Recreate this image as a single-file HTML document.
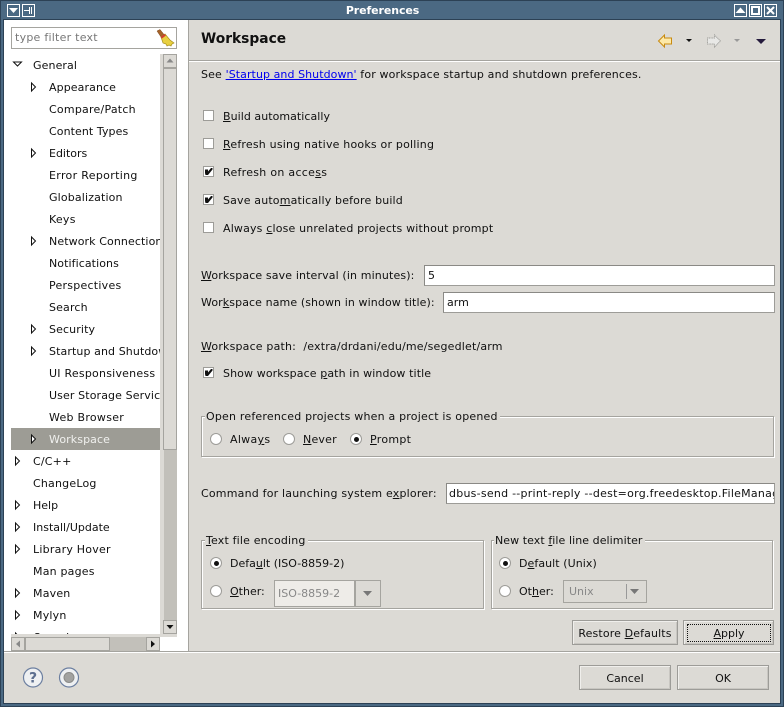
<!DOCTYPE html>
<html><head><meta charset="utf-8">
<style>
html,body{margin:0;padding:0;width:784px;height:707px;overflow:hidden;background:#dcdad5}
*{box-sizing:border-box}
body{font-family:"DejaVu Sans",sans-serif;font-size:11px;color:#101010;position:relative}
.a,.t{position:absolute}
.t{white-space:nowrap;line-height:16px;height:16px;margin-top:1px}
u{text-decoration:underline;text-underline-offset:1px}
.cb{position:absolute;width:11px;height:11px;background:#fff;border:1px solid #9d9c98}
.cb svg{position:absolute;left:0;top:0}
.r{position:absolute;width:12px;height:12px;border-radius:50%;background:#fff;border:1px solid #9d9c98}
.r.on:after{content:"";position:absolute;left:2.5px;top:2.5px;width:5px;height:5px;border-radius:50%;background:#111}
.inp{position:absolute;background:#fff;border:1px solid #9d9c98;border-top-color:#8a8985;border-left-color:#8a8985;height:21px;line-height:19px;padding-left:3px;white-space:nowrap;overflow:hidden}
.btn{position:absolute;background:#dcdad5;border:1px solid #9d9c98;box-shadow:inset 1px 1px 0 #f0efec,inset -1px -1px 0 #c8c6c1;text-align:center;line-height:25px;height:25px}
.grp{position:absolute;border:1px solid #a5a49f;box-shadow:1px 1px 0 #fff,inset 1px 1px 0 #fff}
.grp span{position:absolute;left:3px;top:-8px;background:#dcdad5;padding:0 2px 0 1px;line-height:16px;white-space:nowrap}
.tw{position:absolute;left:0;top:0}
</style></head>
<body>
<!-- window frame -->
<div class="a" style="left:0;top:0;width:784px;height:707px;background:#4b6983"></div>
<div class="a" style="left:0;top:0;width:784px;height:1px;background:#2c4155"></div>
<div class="a" style="left:0;top:0;width:1px;height:707px;background:#2c4155"></div>
<div class="a" style="left:783px;top:0;width:1px;height:707px;background:#2c4155"></div>
<div class="a" style="left:0;top:706px;width:784px;height:1px;background:#2c4155"></div>
<div class="a" style="left:3px;top:19px;width:778px;height:685px;background:#2c4155"></div>
<div class="a" style="left:4px;top:20px;width:776px;height:683px;background:#dcdad5"></div>
<div class="t" style="left:0;top:2px;width:765px;text-align:center;color:#fff;font-weight:bold;font-size:11px;letter-spacing:-.1px">Preferences</div>

<!-- title buttons left -->
<svg class="a" style="left:6px;top:3px" width="30" height="14">
<rect x="1.5" y="1.5" width="12" height="12" fill="#4b6983" stroke="#fff"/><path d="M3 5h9l-4.5 5z" fill="#fff"/>
<rect x="16.5" y="1.5" width="12" height="12" fill="#4b6983" stroke="#fff"/><path d="M18 7.500h5M23.500 4v7M25.500 4v7" stroke="#fff" stroke-width="1" fill="none"/>
</svg>
<!-- title buttons right -->
<svg class="a" style="left:733px;top:3px" width="46" height="14">
<rect x="1.5" y="1.5" width="12" height="12" fill="#4b6983" stroke="#fff"/><path d="M2.5 10h10l-5-5.500z" fill="#fff"/>
<rect x="16.5" y="1.5" width="12" height="12" fill="#4b6983" stroke="#fff"/><rect x="19" y="4" width="7" height="7" fill="none" stroke="#fff" stroke-width="2"/>
<rect x="31.5" y="1.5" width="12" height="12" fill="#4b6983" stroke="#fff"/><path d="M34 4l7 7M41 4l-7 7" stroke="#fff" stroke-width="2"/>
</svg>

<!-- left pane -->
<div class="a" style="left:4px;top:20px;width:184px;height:631px;background:#fff"></div>
<div class="a" style="left:188px;top:20px;width:1px;height:631px;background:#a5a49f"></div>
<div class="a" style="left:11px;top:27px;width:166px;height:22px;background:#fff;border:1px solid #a5a49f"></div>
<div class="t" style="left:15px;top:29px;color:#777;letter-spacing:.25px">type filter text</div>
<svg class="a" style="left:155px;top:28px" width="20" height="20">
<path d="M2 3l3-1.500 4 5-3 2.500z" fill="#a5622a" stroke="#7a4518" stroke-width=".5"/>
<path d="M6 9l4-3 5 6 4 3-2 1-1 2-2-1-2 1-1-2-3-1z" fill="#e8d040" stroke="#a89020" stroke-width=".7"/>
<path d="M5.500 9l4-3 1.500 1.500-4 3z" fill="#d04030"/>
</svg>

<!-- tree -->
<div class="a" style="left:11px;top:428px;width:149px;height:22px;background:#9d9c95"></div>
<div class="a" id="tree" style="left:0;top:0;width:160px;height:636px;overflow:hidden">
<div class="t" style="left:33px;top:57px;letter-spacing:.1px">General</div>
<div class="t" style="left:49px;top:79px;letter-spacing:.1px">Appearance</div>
<div class="t" style="left:49px;top:101px;letter-spacing:.23px">Compare/Patch</div>
<div class="t" style="left:49px;top:123px;letter-spacing:.08px">Content Types</div>
<div class="t" style="left:49px;top:145px">Editors</div>
<div class="t" style="left:49px;top:167px;letter-spacing:.33px">Error Reporting</div>
<div class="t" style="left:49px;top:189px;letter-spacing:.15px">Globalization</div>
<div class="t" style="left:49px;top:211px;letter-spacing:.25px">Keys</div>
<div class="t" style="left:49px;top:233px;letter-spacing:.1px">Network Connections</div>
<div class="t" style="left:49px;top:255px;letter-spacing:.08px">Notifications</div>
<div class="t" style="left:49px;top:277px;letter-spacing:.25px">Perspectives</div>
<div class="t" style="left:49px;top:299px;letter-spacing:.15px">Search</div>
<div class="t" style="left:49px;top:321px;letter-spacing:.12px">Security</div>
<div class="t" style="left:49px;top:343px;letter-spacing:.1px">Startup and Shutdown</div>
<div class="t" style="left:49px;top:365px;letter-spacing:.23px">UI Responsiveness</div>
<div class="t" style="left:49px;top:387px;letter-spacing:.12px">User Storage Service</div>
<div class="t" style="left:49px;top:409px;letter-spacing:.27px">Web Browser</div>
<div class="t" style="left:49px;top:431px;color:#f0f0ee;letter-spacing:.1px">Workspace</div>
<div class="t" style="left:33px;top:453px;letter-spacing:.2px">C/C++</div>
<div class="t" style="left:33px;top:475px;letter-spacing:.2px">ChangeLog</div>
<div class="t" style="left:33px;top:497px">Help</div>
<div class="t" style="left:33px;top:519px">Install/Update</div>
<div class="t" style="left:33px;top:541px;letter-spacing:.23px">Library Hover</div>
<div class="t" style="left:33px;top:563px;letter-spacing:.2px">Man pages</div>
<div class="t" style="left:33px;top:585px;letter-spacing:.2px">Maven</div>
<div class="t" style="left:33px;top:607px;letter-spacing:.2px">Mylyn</div>
<div class="t" style="left:33px;top:629px">Oomph</div>
<svg class="tw" width="60" height="640" fill="#fff" stroke="#111" stroke-width="1">
<path d="M13.500 62h8l-4 4z"/>
<path id="ar" d="M31.500 83v8l4-4z"/>
<path d="M31.500 149v8l4-4z"/>
<path d="M31.500 237v8l4-4z"/>
<path d="M31.500 325v8l4-4z"/>
<path d="M31.500 347v8l4-4z"/>
<path d="M31.500 435v8l4-4z" fill="#fff"/>
<path d="M15.500 457v8l4-4z"/>
<path d="M15.500 501v8l4-4z"/>
<path d="M15.500 523v8l4-4z"/>
<path d="M15.500 545v8l4-4z"/>
<path d="M15.500 589v8l4-4z"/>
<path d="M15.500 611v8l4-4z"/>
<path d="M15.500 633v8l4-4z"/>
</svg>
</div>

<!-- vertical scrollbar -->
<div class="a" style="left:160px;top:54px;width:17px;height:583px;background:#dcdad5"></div>
<div class="a" style="left:164px;top:54px;width:13px;height:580px;background:#c2c0ba"></div>
<div class="a" style="left:163px;top:54px;width:14px;height:14px;background:#dcdad5;border:1px solid #a5a49f"></div>
<svg class="a" style="left:163px;top:54px" width="14" height="14"><path d="M3.500 8.500h7l-3.500-4z" fill="#888"/></svg>
<div class="a" style="left:163px;top:68px;width:14px;height:382px;background:#dcdad5;border:1px solid #a5a49f"></div>
<div class="a" style="left:163px;top:620px;width:14px;height:14px;background:#dcdad5;border:1px solid #a5a49f"></div>
<svg class="a" style="left:163px;top:620px" width="14" height="14"><path d="M3.500 5h7l-3.500 4z" fill="#111"/></svg>
<!-- horizontal scrollbar -->
<div class="a" style="left:11px;top:634px;width:149px;height:3px;background:#dcdad5"></div>
<div class="a" style="left:11px;top:637px;width:149px;height:14px;background:#c2c0ba"></div>
<div class="a" style="left:11px;top:637px;width:14px;height:14px;background:#dcdad5;border:1px solid #a5a49f"></div>
<svg class="a" style="left:11px;top:637px" width="14" height="14"><path d="M9 3.500v7l-4-3.500z" fill="#888"/></svg>
<div class="a" style="left:25px;top:637px;width:85px;height:14px;background:#dcdad5;border:1px solid #a5a49f"></div>
<div class="a" style="left:146px;top:637px;width:14px;height:14px;background:#dcdad5;border:1px solid #a5a49f"></div>
<svg class="a" style="left:146px;top:637px" width="14" height="14"><path d="M5 3.500v7l4-3.500z" fill="#111"/></svg>

<!-- right header -->
<div class="t" style="left:201px;top:29px;font-size:13.8px;font-weight:bold;line-height:18px;height:18px">Workspace</div>
<div class="a" style="left:189px;top:60px;width:591px;height:1px;background:#a5a49f"></div>
<div class="a" style="left:189px;top:61px;width:591px;height:1px;background:#fff"></div>
<svg class="a" style="left:650px;top:28px" width="125" height="24">
<path d="M8.500 13l6-6v3h7v6h-7v3z" fill="#fde9a8" stroke="#c88a10"/>
<path d="M36 11h6l-3 3z" fill="#111"/>
<path d="M70.500 13l-6-6v3h-7v6h7v3z" fill="#e8e8e6" stroke="#a0a09c" stroke-dasharray="1 .6"/>
<path d="M84 11h6l-3 3z" fill="#999"/>
<path d="M106 11h10l-5 5z" fill="#241a3c"/>
</svg>

<div class="t" style="left:201px;top:66px;letter-spacing:.15px">See <a style="color:#0000ee;text-decoration:underline;letter-spacing:.07px">'Startup and Shutdown'</a> for workspace startup and shutdown preferences.</div>

<div class="cb" style="left:203px;top:110px"></div>
<div class="t" style="left:223px;top:108px;letter-spacing:.05px"><u>B</u>uild automatically</div>
<div class="cb" style="left:203px;top:138px"></div>
<div class="t" style="left:223px;top:136px;letter-spacing:.2px"><u>R</u>efresh using native hooks or polling</div>
<div class="cb" style="left:203px;top:166px"><svg width="9" height="9"><path d="M1 2.500h3v2l3-3.500h1.500v1.500l-4.500 5.500h-2.500l-.5-2z" fill="#111"/></svg></div>
<div class="t" style="left:223px;top:164px;letter-spacing:.29px">Refresh on acce<u>s</u>s</div>
<div class="cb" style="left:203px;top:194px"><svg width="9" height="9"><path d="M1 2.500h3v2l3-3.500h1.500v1.500l-4.500 5.500h-2.500l-.5-2z" fill="#111"/></svg></div>
<div class="t" style="left:223px;top:192px;letter-spacing:.16px">Save auto<u>m</u>atically before build</div>
<div class="cb" style="left:203px;top:222px"></div>
<div class="t" style="left:223px;top:220px;letter-spacing:.17px">Always <u>c</u>lose unrelated projects without prompt</div>

<div class="t" style="left:201px;top:267px;letter-spacing:.13px"><u>W</u>orkspace save interval (in minutes):</div>
<div class="inp" style="left:424px;top:265px;width:351px">5</div>
<div class="t" style="left:201px;top:294px;letter-spacing:.1px">Wor<u>k</u>space name (shown in window title):</div>
<div class="inp" style="left:443px;top:292px;width:332px">arm</div>

<div class="t" style="left:201px;top:338px;letter-spacing:.18px"><u>W</u>orkspace path:&nbsp; /extra/drdani/edu/me/segedlet/arm</div>
<div class="cb" style="left:203px;top:367px"><svg width="9" height="9"><path d="M1 2.500h3v2l3-3.500h1.500v1.500l-4.500 5.500h-2.500l-.5-2z" fill="#111"/></svg></div>
<div class="t" style="left:223px;top:365px;letter-spacing:.11px">Show workspace <u>p</u>ath in window title</div>

<div class="grp" style="left:201px;top:416px;width:573px;height:41px"><span style="letter-spacing:.2px">Open referenced projects when a project is opened</span></div>
<div class="r" style="left:210px;top:433px"></div>
<div class="t" style="left:230px;top:431px;letter-spacing:.3px">Alwa<u>y</u>s</div>
<div class="r" style="left:283px;top:433px"></div>
<div class="t" style="left:303px;top:431px;letter-spacing:.2px"><u>N</u>ever</div>
<div class="r on" style="left:350px;top:433px"></div>
<div class="t" style="left:370px;top:431px;letter-spacing:.3px"><u>P</u>rompt</div>

<div class="t" style="left:201px;top:485px;letter-spacing:.2px">Command for launching system e<u>x</u>plorer:</div>
<div class="inp" style="left:446px;top:483px;width:329px;padding-left:2px;letter-spacing:.25px">dbus-send --print-reply --dest=org.freedesktop.FileManager1</div>

<div class="grp" style="left:201px;top:540px;width:283px;height:69px"><span style="letter-spacing:.17px"><u>T</u>ext file encoding</span></div>
<div class="r on" style="left:210px;top:557px"></div>
<div class="t" style="left:230px;top:555px">Defa<u>u</u>lt (ISO-8859-2)</div>
<div class="r" style="left:210px;top:585px"></div>
<div class="t" style="left:230px;top:583px"><u>O</u>ther:</div>
<div class="a" style="left:274px;top:580px;width:81px;height:27px;background:#eeece8;border:1px solid #a5a49f;color:#888;line-height:25px;padding-left:3px">ISO-8859-2</div>
<div class="a" style="left:355px;top:580px;width:26px;height:27px;background:#dcdad5;border:1px solid #a5a49f"></div>
<svg class="a" style="left:355px;top:580px" width="26" height="27"><path d="M8 11h9l-4.500 5z" fill="#777"/></svg>

<div class="grp" style="left:491px;top:540px;width:282px;height:69px"><span style="letter-spacing:.07px;left:2px">New text <u>f</u>ile line delimiter</span></div>
<div class="r on" style="left:499px;top:557px"></div>
<div class="t" style="left:519px;top:555px;letter-spacing:.07px">D<u>e</u>fault (Unix)</div>
<div class="r" style="left:499px;top:585px"></div>
<div class="t" style="left:519px;top:583px">Ot<u>h</u>er:</div>
<div class="a" style="left:563px;top:580px;width:84px;height:23px;background:#dcdad5;border:1px solid #a5a49f;color:#888;line-height:21px;padding-left:5px">Unix</div>
<div class="a" style="left:626px;top:584px;width:1px;height:15px;background:#999"></div>
<svg class="a" style="left:627px;top:580px" width="20" height="23"><path d="M3 9h9l-4.500 5z" fill="#777"/></svg>

<div class="btn" style="left:572px;top:620px;width:106px;letter-spacing:.13px">Restore <u>D</u>efaults</div>
<div class="btn" style="left:683px;top:620px;width:91px">
<div class="a" style="left:3px;top:3px;width:84px;height:18px;border:1px dotted #111;line-height:17px"><u>A</u>pply</div>
</div>

<!-- footer -->
<div class="a" style="left:4px;top:651px;width:776px;height:1px;background:#a5a49f"></div>
<div class="a" style="left:4px;top:652px;width:776px;height:1px;background:#fff"></div>
<svg class="a" style="left:20px;top:664px" width="62" height="26">
<circle cx="13" cy="13.500" r="9.500" fill="#eef0f2" stroke="#6c7fa0" stroke-width="1.200"/>
<text x="13" y="18.500" text-anchor="middle" font-family="DejaVu Sans" font-weight="bold" font-size="14" fill="#5d6f90">?</text>
<circle cx="49" cy="13.500" r="9.500" fill="#eef0f2" stroke="#6c7fa0" stroke-width="1.200"/>
<circle cx="49" cy="13.500" r="5" fill="#a2a2a0" stroke="#8a8a88"/>
</svg>
<div class="btn" style="left:579px;top:665px;width:92px">Cancel</div>
<div class="btn" style="left:677px;top:665px;width:92px">OK</div>
</body></html>
